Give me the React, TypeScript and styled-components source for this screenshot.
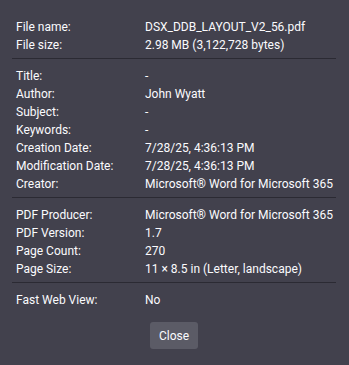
import React from "react";
import styled, { createGlobalStyle } from "styled-components";

type Row = { label: string; value: string };

const SECTIONS: Row[][] = [
  [
    { label: "File name:", value: "DSX_DDB_LAYOUT_V2_56.pdf" },
    { label: "File size:", value: "2.98 MB (3,122,728 bytes)" },
  ],
  [
    { label: "Title:", value: "-" },
    { label: "Author:", value: "John Wyatt" },
    { label: "Subject:", value: "-" },
    { label: "Keywords:", value: "-" },
    { label: "Creation Date:", value: "7/28/25, 4:36:13 PM" },
    { label: "Modification Date:", value: "7/28/25, 4:36:13 PM" },
    { label: "Creator:", value: "Microsoft® Word for Microsoft 365" },
  ],
  [
    { label: "PDF Producer:", value: "Microsoft® Word for Microsoft 365" },
    { label: "PDF Version:", value: "1.7" },
    { label: "Page Count:", value: "270" },
    { label: "Page Size:", value: "11 × 8.5 in (Letter, landscape)" },
  ],
  [{ label: "Fast Web View:", value: "No" }],
];

const GlobalStyle = createGlobalStyle`
  html, body {
    margin: 0;
    background: #42414d;
  }
  body {
    font-family: Roboto, "Liberation Sans", sans-serif;
    font-size: 12px;
    color: #fbfbfe;
  }
`;

const Dialog = styled.div`
  display: flex;
  flex-direction: column;
  padding: 18px 13px 16px 12px;
  min-height: 365px;
  box-sizing: border-box;
  background: #42414d;
`;

const Section = styled.div`
  display: flex;
  flex-direction: column;
`;

const Separator = styled.div`
  height: 1px;
  margin: 4px 0 8px;
  background: #2b2a33;
`;

const PropRow = styled.div`
  display: grid;
  grid-template-columns: 129px 1fr;
  height: 18px;
  line-height: 18px;
  padding-left: 4px;
  white-space: nowrap;
`;

const Label = styled.span`
  color: #fbfbfe;
`;

const Value = styled.span`
  color: #fbfbfe;
`;

const Buttons = styled.div`
  display: flex;
  justify-content: center;
  margin-top: 13px;
`;

const CloseButton = styled.button`
  height: 27px;
  padding: 0 9px;
  border: none;
  border-radius: 3px;
  background: #5b5b66;
  color: #fbfbfe;
  font-family: inherit;
  font-size: 12px;
  cursor: pointer;
`;

export default function App() {
  return (
    <>
      <GlobalStyle />
      <Dialog>
        {SECTIONS.map((rows, i) => (
          <React.Fragment key={i}>
            {i > 0 && <Separator />}
            <Section>
              {rows.map((r) => (
                <PropRow key={r.label}>
                  <Label>{r.label}</Label>
                  <Value>{r.value}</Value>
                </PropRow>
              ))}
            </Section>
          </React.Fragment>
        ))}
        <Buttons>
          <CloseButton>Close</CloseButton>
        </Buttons>
      </Dialog>
    </>
  );
}
